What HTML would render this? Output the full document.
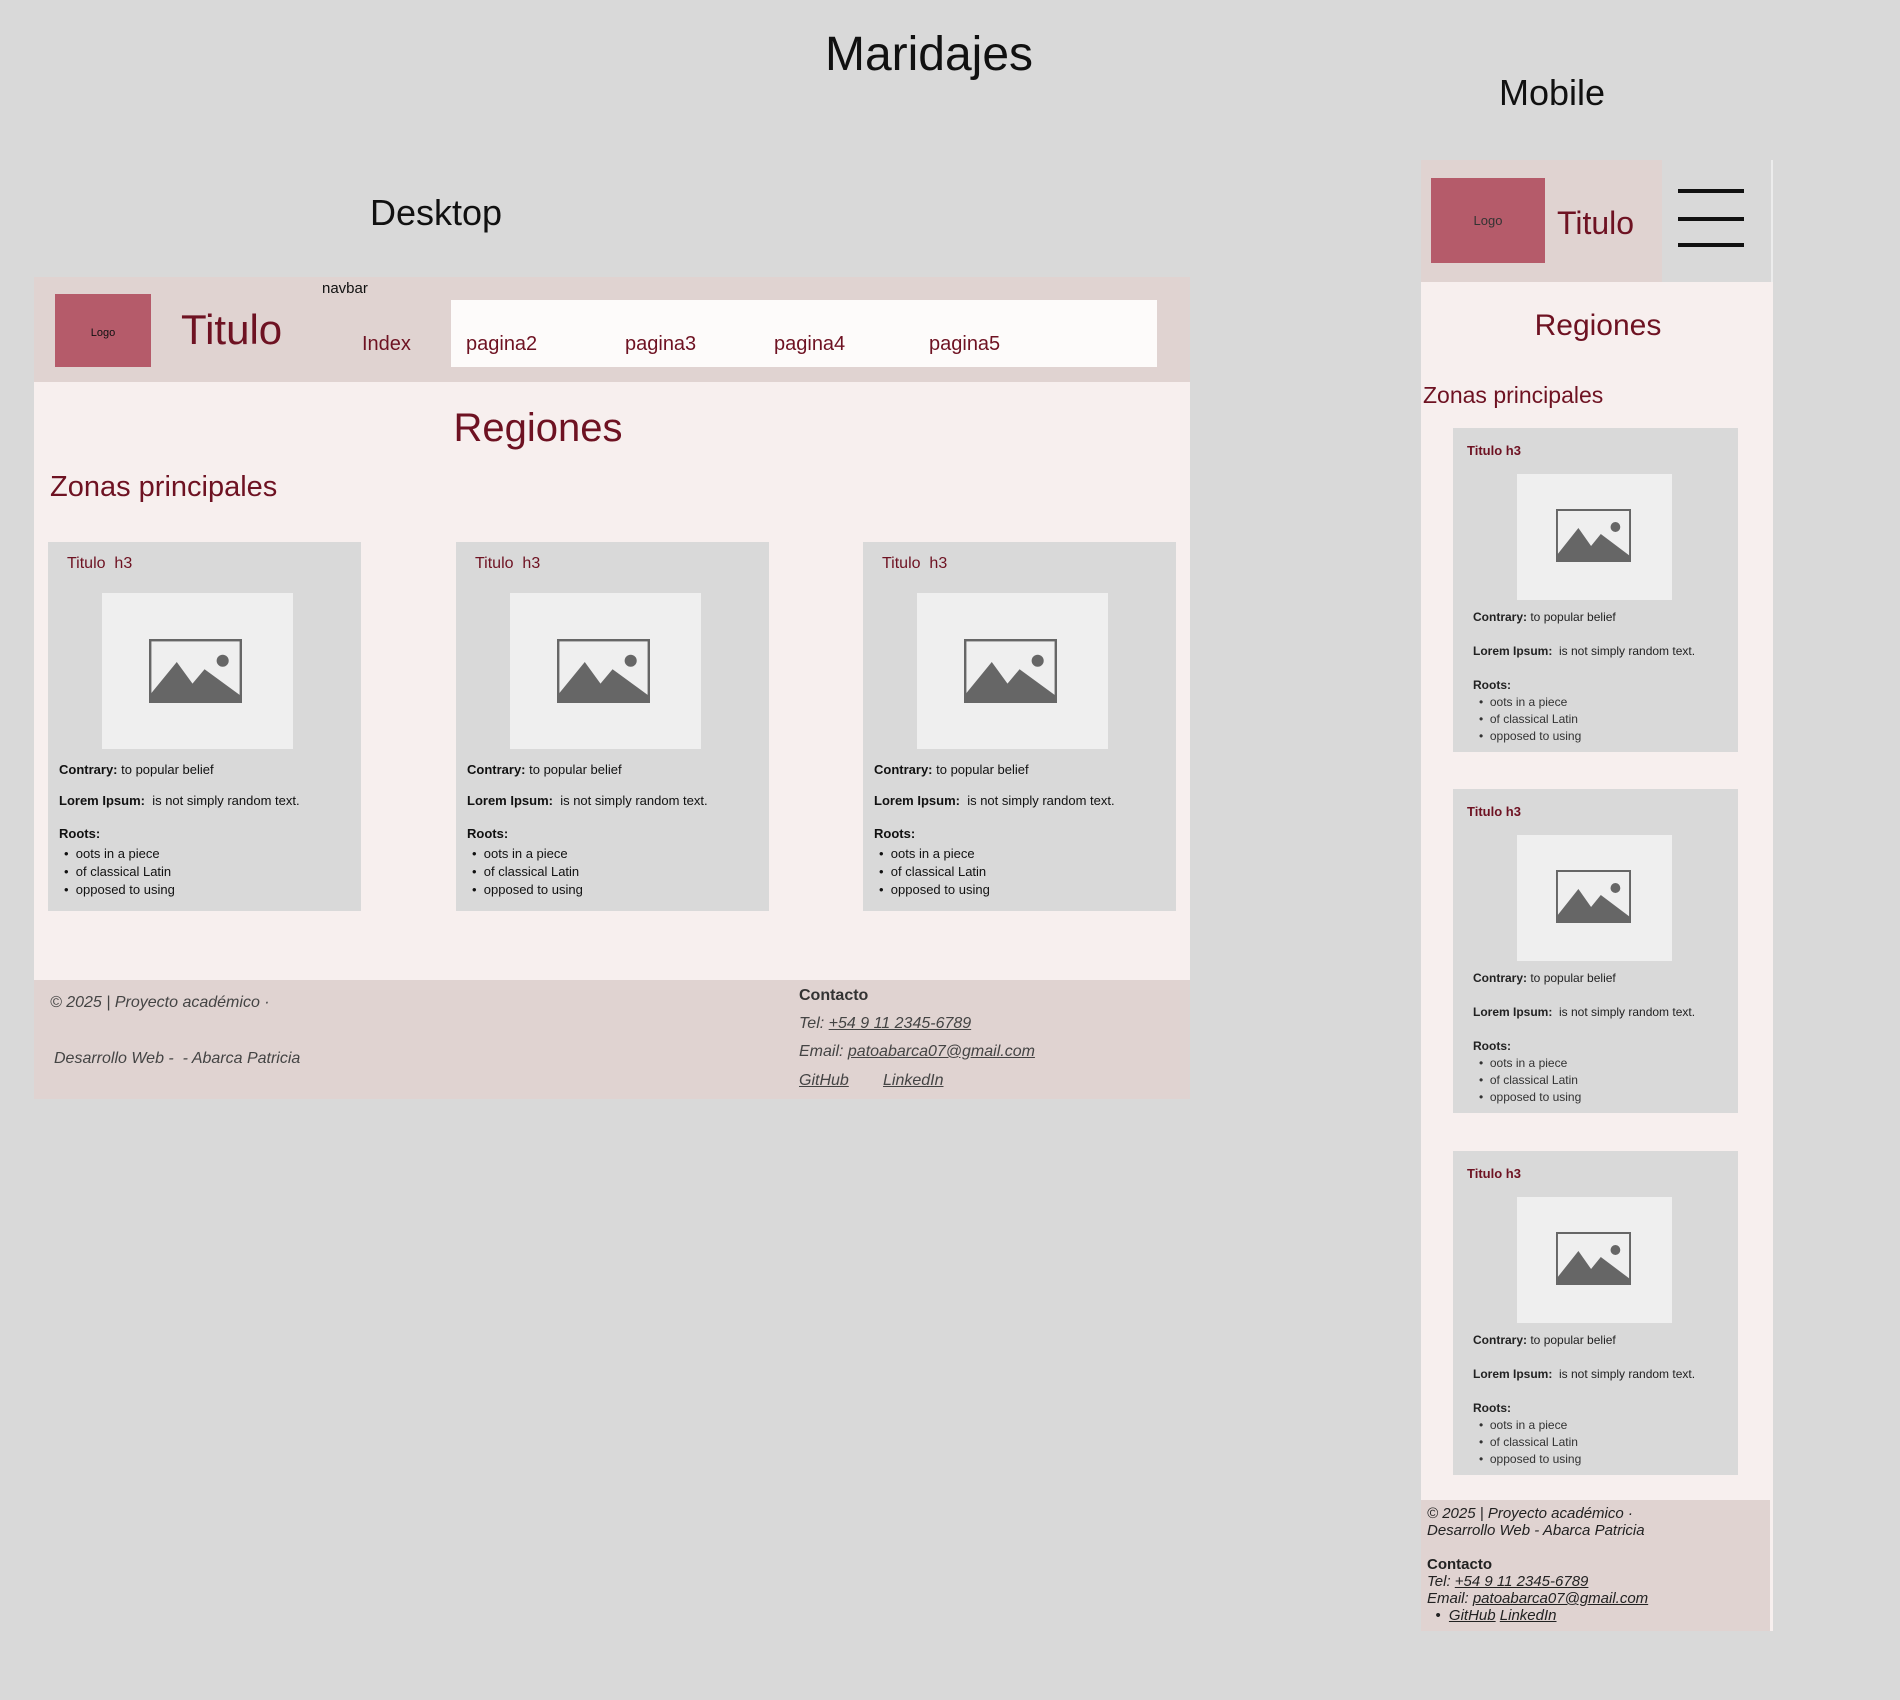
<!DOCTYPE html>
<html><head><meta charset="utf-8"><style>
*{margin:0;padding:0;box-sizing:border-box}
body{width:1900px;height:1700px;background:#d9d9d9;position:relative;overflow:hidden;font-family:"Liberation Sans",sans-serif;color:#111}
.a{position:absolute;line-height:1;white-space:nowrap}
.r{color:#6e1222}
.box{position:absolute}
.card{position:absolute;background:#d9d9d9}
.img{position:absolute;background:#efefef}
.img svg{position:absolute}
.ft{font-style:italic;color:#444}
u{text-decoration:underline}
</style></head><body>

<div class="a" style="left:0;width:1858px;text-align:center;top:31px;font-size:48px">Maridajes</div>
<div class="a" style="left:1452px;width:200px;text-align:center;top:75px;font-size:36px">Mobile</div>
<div class="a" style="left:336px;width:200px;text-align:center;top:195px;font-size:36px">Desktop</div>

<!-- Desktop frame -->
<div class="box" style="left:34px;top:277px;width:1156px;height:822px;background:#f7efee"></div>
<div class="box" style="left:34px;top:277px;width:1156px;height:105px;background:#e0d3d1"></div>
<div class="box" style="left:55px;top:294px;width:96px;height:73px;background:#b55b6a"></div>
<div class="a" style="left:55px;width:96px;text-align:center;top:328px;font-size:11px">Logo</div>
<div class="a r" style="left:181px;top:309px;font-size:42px">Titulo</div>
<div class="a" style="left:322px;top:281px;font-size:15px">navbar</div>
<div class="box" style="left:451px;top:300px;width:706px;height:67px;background:#fdfbfa"></div>
<div class="a r" style="left:362px;top:334px;font-size:20px">Index</div>
<div class="a r" style="left:466px;top:334px;font-size:20px">pagina2</div>
<div class="a r" style="left:625px;top:334px;font-size:20px">pagina3</div>
<div class="a r" style="left:774px;top:334px;font-size:20px">pagina4</div>
<div class="a r" style="left:929px;top:334px;font-size:20px">pagina5</div>
<div class="a r" style="left:338px;width:400px;text-align:center;top:408px;font-size:40px">Regiones</div>
<div class="a r" style="left:50px;top:473px;font-size:29px">Zonas principales</div>

<!-- desktop cards -->
<div id="dc"></div>

<div class="box" style="left:34px;top:980px;width:1156px;height:119px;background:#e0d3d1"></div>
<div class="a ft" style="left:50px;top:995px;font-size:16px">© 2025 | Proyecto académico ·</div>
<div class="a ft" style="left:54px;top:1051px;font-size:16px">Desarrollo Web -&nbsp; - Abarca Patricia</div>
<div class="a" style="left:799px;top:988px;font-size:16px;font-weight:bold;color:#333">Contacto</div>
<div class="a ft" style="left:799px;top:1016px;font-size:16px">Tel: <u>+54 9 11 2345-6789</u></div>
<div class="a ft" style="left:799px;top:1044px;font-size:16px">Email: <u>patoabarca07@gmail.com</u></div>
<div class="a ft" style="left:799px;top:1073px;font-size:16px"><u>GitHub</u></div>
<div class="a ft" style="left:883px;top:1073px;font-size:16px"><u>LinkedIn</u></div>

<!-- Mobile frame -->
<div class="box" style="left:1421px;top:160px;width:352px;height:1471px;background:#f7efee"></div>
<div class="box" style="left:1421px;top:160px;width:241px;height:122px;background:#e0d3d1"></div>
<div class="box" style="left:1662px;top:160px;width:111px;height:122px;background:#d9d9d9;border-right:2px solid #ececec"></div>
<div class="box" style="left:1431px;top:178px;width:114px;height:85px;background:#b55b6a"></div>
<div class="a" style="left:1431px;width:114px;text-align:center;top:214px;font-size:13px;color:#333">Logo</div>
<div class="a r" style="left:1557px;top:207px;font-size:32px">Titulo</div>
<div class="box" style="left:1678px;top:189px;width:66px;height:4px;background:#111"></div>
<div class="box" style="left:1678px;top:217px;width:66px;height:4px;background:#111"></div>
<div class="box" style="left:1678px;top:243px;width:66px;height:4px;background:#111"></div>
<div class="a r" style="left:1448px;width:300px;text-align:center;top:311px;font-size:30px">Regiones</div>
<div class="a r" style="left:1423px;top:384px;font-size:23px">Zonas principales</div>
<div id="mc"></div>

<div class="box" style="left:1421px;top:1500px;width:349px;height:131px;background:#e0d3d1"></div>
<div class="a" style="left:1427px;top:1505px;font-size:15px;line-height:17px;font-style:italic;color:#222">© 2025 | Proyecto académico ·<br>Desarrollo Web - Abarca Patricia<br><br><b style="font-style:normal">Contacto</b><br>Tel: <u>+54 9 11 2345-6789</u><br>Email: <u>patoabarca07@gmail.com</u><br>&nbsp;&nbsp;•&nbsp;&nbsp;<u>GitHub</u> <u>LinkedIn</u></div>

<script>
function icon(w,h){return '<svg width="'+w+'" height="'+h+'" viewBox="0 0 77 53" preserveAspectRatio="none"><rect x="1" y="1" width="75" height="51" fill="none" stroke="#666" stroke-width="2"/><polygon points="1,52 1,46 23,19 36,37 46,25 76,47 76,52" fill="#666"/><circle cx="61" cy="18" r="5" fill="#666"/></svg>';}
var d='';
[48,456,863].forEach(function(x){
d+='<div class="card" style="left:'+x+'px;top:542px;width:313px;height:369px">'+
'<div class="a r" style="left:19px;top:14px;font-size:16px">Titulo&nbsp; h3</div>'+
'<div class="img" style="left:54px;top:51px;width:191px;height:156px"><div style="position:absolute;left:47px;top:46px">'+icon(93,64)+'</div></div>'+
'<div class="a" style="left:11px;top:221px;font-size:13px"><b>Contrary:</b> to popular belief</div>'+
'<div class="a" style="left:11px;top:252px;font-size:13px"><b>Lorem Ipsum:</b>&nbsp; is not simply random text.</div>'+
'<div class="a" style="left:11px;top:285px;font-size:13px"><b>Roots:</b></div>'+
'<div class="a" style="left:16px;top:303px;font-size:13px;line-height:18px">•&nbsp; oots in a piece<br>•&nbsp; of classical Latin<br>•&nbsp; opposed to using</div>'+
'</div>';});
document.getElementById('dc').outerHTML=d;
var m='';
[428,789,1151].forEach(function(y){
m+='<div class="card" style="left:1453px;top:'+y+'px;width:285px;height:324px">'+
'<div class="a r" style="left:14px;top:16px;font-size:13px;font-weight:bold">Titulo h3</div>'+
'<div class="img" style="left:64px;top:46px;width:155px;height:126px"><div style="position:absolute;left:39px;top:35px">'+icon(75,53)+'</div></div>'+
'<div class="a" style="left:20px;top:183px;font-size:12px;color:#222"><b>Contrary:</b> to popular belief</div>'+
'<div class="a" style="left:20px;top:217px;font-size:12px;color:#222"><b>Lorem Ipsum:</b>&nbsp; is not simply random text.</div>'+
'<div class="a" style="left:20px;top:251px;font-size:12px;color:#222"><b>Roots:</b></div>'+
'<div class="a" style="left:26px;top:266px;font-size:12px;line-height:17px;color:#333">•&nbsp; oots in a piece<br>•&nbsp; of classical Latin<br>•&nbsp; opposed to using</div>'+
'</div>';});
document.getElementById('mc').outerHTML=m;
</script>
</body></html>
